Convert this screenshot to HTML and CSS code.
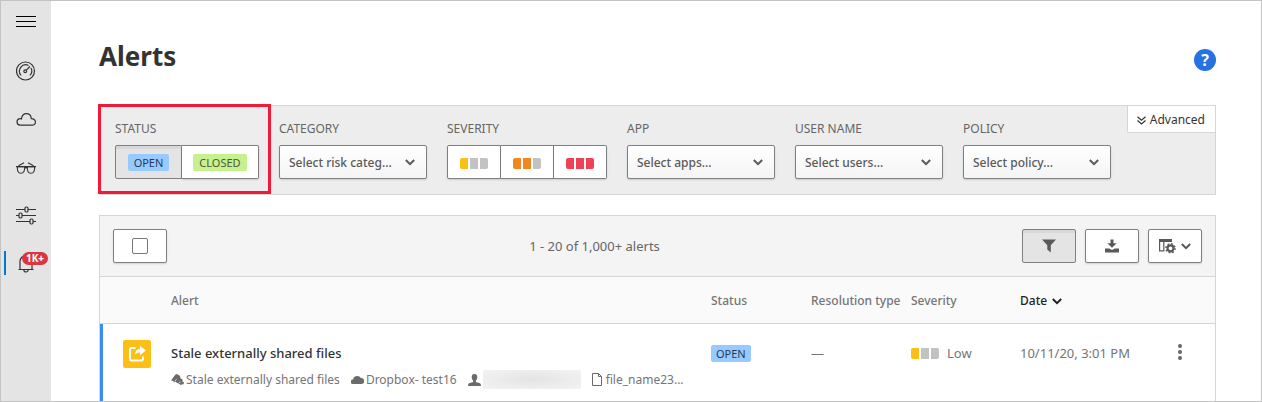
FILE: index.html
```html
<!DOCTYPE html>
<html lang="en">
<head>
<meta charset="utf-8">
<title>Alerts</title>
<link rel="stylesheet" href="styles.css">
</head>
<body>
<div class="app">
  <nav class="sidebar" aria-label="Main">
    <button class="nav-item nav-menu" aria-label="Menu">
      <svg width="20" height="12" viewBox="0 0 20 12"><path d="M0 .5h20M0 5.500h20M0 10.500h20" stroke="#000" fill="none"/></svg>
    </button>
    <a class="nav-item" href="#" aria-label="Dashboard">
      <svg width="20" height="20" viewBox="0 0 20 20" fill="none" stroke="#333" stroke-width="1.200"><circle cx="9.500" cy="10" r="9"/><path d="M5.100 14.400A6.300 6.300 0 0 1 12.500 4.500M15 7a6.300 6.300 0 0 1-1.100 7.400M10.300 9.200 14 5.500"/><circle cx="9.200" cy="10.300" r="1.400"/></svg>
    </a>
    <a class="nav-item" href="#" aria-label="Discover">
      <svg width="20" height="13" viewBox="0 0 20 13" fill="none" stroke="#333" stroke-width="1.200"><path d="M4 12.200a3.300 3.300 0 0 1-.4-6.500c.6-.2 1.200 0 1.800.2C5.800 2.800 7.800.7 10.400.7c2.300 0 4.200 1.500 4.700 3.700-.1.500-.1.800.2 1.200C17.700 5.600 19.400 7 19.400 9s-1.500 3.200-3.400 3.200z"/></svg>
    </a>
    <a class="nav-item" href="#" aria-label="Investigate">
      <svg width="20" height="14" viewBox="0 -2 20 14" fill="none" stroke="#333" stroke-width="1.100"><path d="M0 4.600h20M2.500 3.800 8 .8M17.500 3.800 12 .8M8.800 6q1.200-.8 2.400 0"/><path d="M1.400 4.600h7.200c.5 4-1 6.700-3.700 6.700S.9 8.700 1.400 4.600zM11.400 4.600h7.200c.5 4-1 6.700-3.700 6.700s-4-2.600-3.500-6.700z"/></svg>
    </a>
    <a class="nav-item" href="#" aria-label="Control">
      <svg width="20" height="19" viewBox="0 0 20 19" fill="#e4e4e4" stroke="#333" stroke-width="1.200"><path d="M0 3.500h20M0 9.500h20M0 15.500h20"/><rect x="9" y="1" width="3" height="5" rx="1.200"/><rect x="3" y="7" width="3" height="5" rx="1.200"/><rect x="14" y="13" width="3" height="5" rx="1.200"/></svg>
    </a>
    <a class="nav-item nav-active" href="#" aria-label="Alerts, more than 1000">
      <svg width="18" height="19" viewBox="0 0 18 19" fill="none" stroke="#333" stroke-width="1.200"><path d="M1.500 15.500h15M3 15.500V7.500a6 6 0 0 1 12 0v8M6.800 15.800a2.200 2.200 0 0 0 4.400 0"/></svg>
      <span class="nav-badge">1K+</span>
    </a>
  </nav>

  <main class="main">
    <header class="page-head">
      <h1>Alerts</h1>
      <button class="help" aria-label="Help">?</button>
    </header>

    <section class="filters" aria-label="Filters">
      <div class="field field-marked" role="group" aria-labelledby="lbl-status">
        <span class="label" id="lbl-status">STATUS</span>
        <div class="segments">
          <button class="seg seg-open pressed" aria-pressed="true"><span class="tag tag-open">OPEN</span></button>
          <button class="seg seg-closed"><span class="tag tag-closed">CLOSED</span></button>
        </div>
      </div>
      <div class="field">
        <label class="label" for="category">CATEGORY</label>
        <div class="select-wrap"><select id="category"><option>Select risk categ...</option></select><svg class="chevron" width="10" height="7" viewBox="0 0 10 7"><path d="m.8 1 4.200 4.200L9.200 1"/></svg></div>
      </div>
      <div class="field" role="group" aria-labelledby="lbl-severity">
        <span class="label" id="lbl-severity">SEVERITY</span>
        <div class="segments">
          <button class="seg seg-sev" aria-label="Low"><span class="sev low"><i></i><i></i><i></i></span></button>
          <button class="seg seg-sev" aria-label="Medium"><span class="sev medium"><i></i><i></i><i></i></span></button>
          <button class="seg seg-sev" aria-label="High"><span class="sev high"><i></i><i></i><i></i></span></button>
        </div>
      </div>
      <div class="field">
        <label class="label" for="app">APP</label>
        <div class="select-wrap"><select id="app"><option>Select apps...</option></select><svg class="chevron" width="10" height="7" viewBox="0 0 10 7"><path d="m.8 1 4.200 4.200L9.200 1"/></svg></div>
      </div>
      <div class="field">
        <label class="label" for="user">USER NAME</label>
        <div class="select-wrap"><select id="user"><option>Select users...</option></select><svg class="chevron" width="10" height="7" viewBox="0 0 10 7"><path d="m.8 1 4.200 4.200L9.200 1"/></svg></div>
      </div>
      <div class="field">
        <label class="label" for="policy">POLICY</label>
        <div class="select-wrap"><select id="policy"><option>Select policy...</option></select><svg class="chevron" width="10" height="7" viewBox="0 0 10 7"><path d="m.8 1 4.200 4.200L9.200 1"/></svg></div>
      </div>
      <button class="advanced">
        <svg width="9" height="9" viewBox="0 0 9 9" fill="none" stroke="#333" stroke-width="1.200"><path d="m.5.800 4 3.500 4-3.500M.5 4.500l4 3.500 4-3.500"/></svg>
        Advanced
      </button>
    </section>

    <section class="results" aria-label="Results">
      <div class="toolbar">
        <label class="btn select-all"><input type="checkbox" aria-label="Select all"></label>
        <span class="count">1 - 20 of 1,000+ alerts</span>
        <div class="tools">
          <button class="btn pressed" aria-label="Toggle filters" aria-pressed="true">
            <svg width="14" height="14" viewBox="0 0 14 14" fill="#595959"><path d="M0 .5h14L8.800 6.300v7.200L5.300 10.500V6.300z"/></svg>
          </button>
          <button class="btn" aria-label="Export">
            <svg width="14" height="14" viewBox="0 0 14 14" fill="#595959"><path d="M5.500.5h3v3.700h3.200L7 8.700 2.300 4.200h3.200zM0 9.500h4.300L7 11l2.700-1.500H14v4H0z"/></svg>
          </button>
          <button class="btn" aria-label="Table settings">
            <svg width="17" height="15" viewBox="0 0 17 15"><path d="M.6 2v9.900h4.200V2" fill="none" stroke="#595959" stroke-width="1.200"/><path d="M0 0h13v3H0z" fill="#595959"/><circle cx="11.500" cy="9.300" r="5.400" fill="#fff"/><circle cx="11.500" cy="9.300" r="3" fill="#fff" stroke="#595959" stroke-width="2.200"/><circle cx="11.500" cy="9.300" r="4.600" fill="none" stroke="#595959" stroke-width="1.400" stroke-dasharray="1.800 1.813"/></svg>
            <svg class="chevron-small" width="10" height="7" viewBox="0 0 10 7"><path d="m.8 1 4.200 4.200L9.200 1"/></svg>
          </button>
        </div>
      </div>

      <table>
        <thead>
          <tr>
            <th class="c-icon"></th>
            <th>Alert</th>
            <th class="c-status">Status</th>
            <th class="c-resolution">Resolution type</th>
            <th class="c-severity">Severity</th>
            <th class="c-date sorted" aria-sort="descending">Date <svg class="chevron-sort" width="10" height="7" viewBox="0 0 10 7"><path d="m.8 1 4.200 4.200L9.200 1"/></svg></th>
            <th class="c-menu"></th>
          </tr>
        </thead>
        <tbody>
          <tr>
            <td class="c-icon">
              <span class="share"><svg width="18" height="18" viewBox="0 0 18 18"><path d="M7.500 3H3.500a1.500 1.500 0 0 0-1.500 1.500v9.500a1.500 1.500 0 0 0 1.500 1.500h10a1.500 1.500 0 0 0 1.500-1.500v-2.500" fill="none" stroke="#fff" stroke-width="2"/><path d="M12 .8 17.800 5.500 12 10.200V7.600c-2.300 0-3.900.6-5 2.400.2-3.600 2-6 5-6.500z" fill="#fff"/></svg></span>
            </td>
            <td>
              <div class="alert-title">Stale externally shared files</div>
              <div class="meta">
                <span class="meta-item">
                  <svg width="13" height="11" viewBox="0 0 13 11" fill="#6b6b6b"><path d="M0 6.500 4.200.7 6 0l3 2 .6 2.600 2 .8-.2 2 1.600.8-.5 2-1.800.3-1.200.5-1.700-1.500-1.800-.4L4.500 7.500l-1.700 1.100L2.500 7z"/><path d="m3.800 7 1.900-1.700M8 8.500l1.600-.5" stroke="#fff" stroke-width=".7"/></svg>
                  Stale externally shared files
                </span>
                <span class="meta-item">
                  <svg width="13" height="9" viewBox="0 0 13 9" fill="#6b6b6b"><path d="M2.300 9A2.300 2.300 0 0 1 2 4.400 4.300 4.300 0 0 1 9.900 3 3 3 0 0 1 10.500 9z"/></svg>
                  Dropbox- test16
                </span>
                <span class="meta-item">
                  <svg width="13" height="12" viewBox="0 0 13 12" fill="#6b6b6b"><path d="M6.500 0C8.500 0 9.300 1.300 9.300 3S8.600 5.900 7.900 6.600v1.300L12 9.300q1 .5 1 2.700H0q0-2.200 1-2.700l4.100-1.400V6.600C4.400 5.900 3.700 4.700 3.700 3S4.500 0 6.500 0z"/></svg>
                  <span class="redacted"></span>
                </span>
                <span class="meta-item meta-file">
                  <svg width="10" height="13" viewBox="0 0 10 13" fill="none" stroke="#6b6b6b"><path d="M.5.5h6l3 3v9h-9zM6.500.5v3h3"/></svg>
                  file_name23...
                </span>
              </div>
            </td>
            <td><span class="tag tag-open">OPEN</span></td>
            <td>—</td>
            <td><span class="severity"><span class="sev low"><i></i><i></i><i></i></span>Low</span></td>
            <td>10/11/20, 3:01 PM</td>
            <td class="c-menu"><button class="more" aria-label="More actions"><svg width="4" height="16" viewBox="0 0 4 16" fill="#666"><circle cx="2" cy="2" r="2"/><circle cx="2" cy="8" r="2"/><circle cx="2" cy="14" r="2"/></svg></button></td>
          </tr>
        </tbody>
      </table>
    </section>
  </main>
</div>
</body>
</html>
```
FILE: styles.css
```css
* { box-sizing: border-box; }
body { margin: 0; background: #fff; color: #333; font: 12px/16px "Noto Sans", "Open Sans", sans-serif; }
button { font: inherit; color: inherit; padding: 0; border: 0; background: none; cursor: pointer; }
svg { display: block; flex: none; }

.app { display: flex; min-height: 100vh; border: 1px solid #c3c3c3; }

.sidebar { width: 50px; flex: none; background: #e4e4e4; display: flex; flex-direction: column; }
.nav-item { height: 48px; display: flex; align-items: center; justify-content: center; position: relative; }
.nav-menu { height: 42px; margin-bottom: 4px; }
.nav-active::before { content: ""; position: absolute; left: 3px; top: 12px; width: 2px; height: 24px; background: #0078d4; }
.nav-badge { position: absolute; left: 21px; top: 13px; height: 13px; padding: 0 4px; border-radius: 7px; background: #d9363e; color: #fff; font-size: 10px; line-height: 13px; font-weight: 700; }

.main { flex: 1; min-width: 0; padding: 0 45px 0 48px; }
.page-head { display: flex; align-items: center; justify-content: space-between; padding: 35px 0 29px; }
h1 { margin: 0; font-size: 26px; line-height: 40px; font-weight: 700; }
.help { width: 22px; height: 22px; margin-top: 8px; border-radius: 50%; background: #2672e3; color: #fff; font-size: 16px; line-height: 22px; font-weight: 700; }

.filters { position: relative; display: flex; gap: 20px; padding: 14px 15px 15px; border: 1px solid #d6d6d6; background: #ededed; }
.field { position: relative; display: flex; flex-direction: column; gap: 8px; }
.field-marked::after { content: ""; position: absolute; inset: -16px -12px -15px -17px; border: 3px solid #f01b38; pointer-events: none; }
.label { color: #666; line-height: 17px; }
.segments { display: flex; }
.seg { height: 34px; display: flex; align-items: center; justify-content: center; background: #fff; border: 1px solid #808080; box-shadow: 0 1px 2px rgba(0, 0, 0, .15); }
.seg + .seg { border-left: 0; }
.seg:first-child { border-radius: 2px 0 0 2px; }
.seg:last-child { border-radius: 0 2px 2px 0; }
.seg-open { width: 67px; }
.seg-closed { width: 77px; }
.seg-sev { width: 53px; padding-top: 2px; }
.seg-sev:first-child { width: 54px; }
.pressed, .btn.pressed { background: #e4e4e4; box-shadow: inset 0 3px 0 #d8d8d8; }
.tag { display: inline-block; height: 17px; padding: 0 5px; border-radius: 2px; font-size: 11px; line-height: 18px; }
.seg .tag { padding: 0 6px; }
.tag-open { background: #99caff; color: #1d3a5a; }
.tag-closed { background: #c7f08f; color: #4a5a35; }

.select-wrap { position: relative; width: 148px; }
select { appearance: none; width: 100%; height: 34px; padding: 2px 30px 0 9px; border: 1px solid #808080; border-radius: 2px; background: linear-gradient(#fff, #f4f4f4); box-shadow: 0 1px 2px rgba(0, 0, 0, .15); color: #595959; font: 500 12px/16px "Noto Sans", "Open Sans", sans-serif; }
.chevron { position: absolute; right: 12px; top: 14px; pointer-events: none; }
.chevron path, .chevron-small path, .chevron-sort path { fill: none; stroke: #595959; stroke-width: 2; }

.sev { display: inline-flex; gap: 2px; }
.sev i { width: 8px; height: 11px; background: #c2c2c0; }
.sev i:first-child { border-radius: 2px 0 0 2px; }
.sev i:last-child { border-radius: 0 2px 2px 0; }
.low i:first-child { background: #fbbf16; }
.medium i:not(:last-child) { background: #f28722; }
.high i { background: #ef4056; }

.advanced { position: absolute; top: 0; right: 0; height: 27px; padding: 2px 10px 0 9px; display: flex; align-items: center; gap: 4px; background: #fff; border: 1px solid #d6d6d6; border-width: 0 0 1px 1px; border-radius: 0 0 0 2px; }

.results { margin-top: 20px; border: 1px solid #d6d6d6; border-bottom: 0; }
.toolbar { display: grid; grid-template-columns: auto 1fr auto; align-items: center; padding: 13px; height: 61px; background: #f4f4f4; border-bottom: 1px solid #d6d6d6; }
.btn { width: 54px; height: 34px; display: flex; align-items: center; justify-content: center; gap: 5px; background: #fff; border: 1px solid #808080; border-radius: 2px; box-shadow: 0 1px 2px rgba(0, 0, 0, .15); }
.select-all input { appearance: none; margin: 0; width: 16px; height: 16px; border: 1px solid #767676; border-radius: 2px; background: #fff; }
.count { color: #666; font-size: 13px; line-height: 18px; text-align: center; }
.tools { display: flex; gap: 9px; justify-content: flex-end; }

table { width: 100%; border-collapse: separate; border-spacing: 0; table-layout: fixed; }
th { height: 47px; padding: 1px 0 0; text-align: left; font-weight: 500; color: #757575; background: #fafafa; border-bottom: 1px solid #d6d6d6; white-space: nowrap; }
th.sorted { color: #222; }
.chevron-sort { display: inline-block; margin-left: 2px; }
.chevron-sort path { stroke: #222; }
th.c-icon { width: 71px; }
.c-status, .c-resolution { width: 100px; }
.c-severity { width: 109px; }
.c-date { width: 158px; }
th.c-menu { width: 37px; }
td { padding: 20px 0 12px; vertical-align: top; color: #757575; font-size: 13px; line-height: 18px; }
td.c-icon { padding: 16px 0 0 20px; border-left: 3px solid #3b8df5; }
.share { width: 28px; height: 28px; display: flex; align-items: center; justify-content: center; border-radius: 2px; background: #fbbf16; }
.alert-title { color: #333; font-weight: 500; }
.meta { display: flex; margin-top: 8px; font-size: 12px; gap: 11px; white-space: nowrap; }
.meta-item { display: flex; align-items: center; gap: 2px; }
.meta-file { gap: 4px; }
.redacted { width: 98px; height: 19px; background: radial-gradient(ellipse at center, #e4e4e4, #f3f3f3); }
.severity { display: flex; align-items: center; gap: 8px; }
.more { display: block; }
```
